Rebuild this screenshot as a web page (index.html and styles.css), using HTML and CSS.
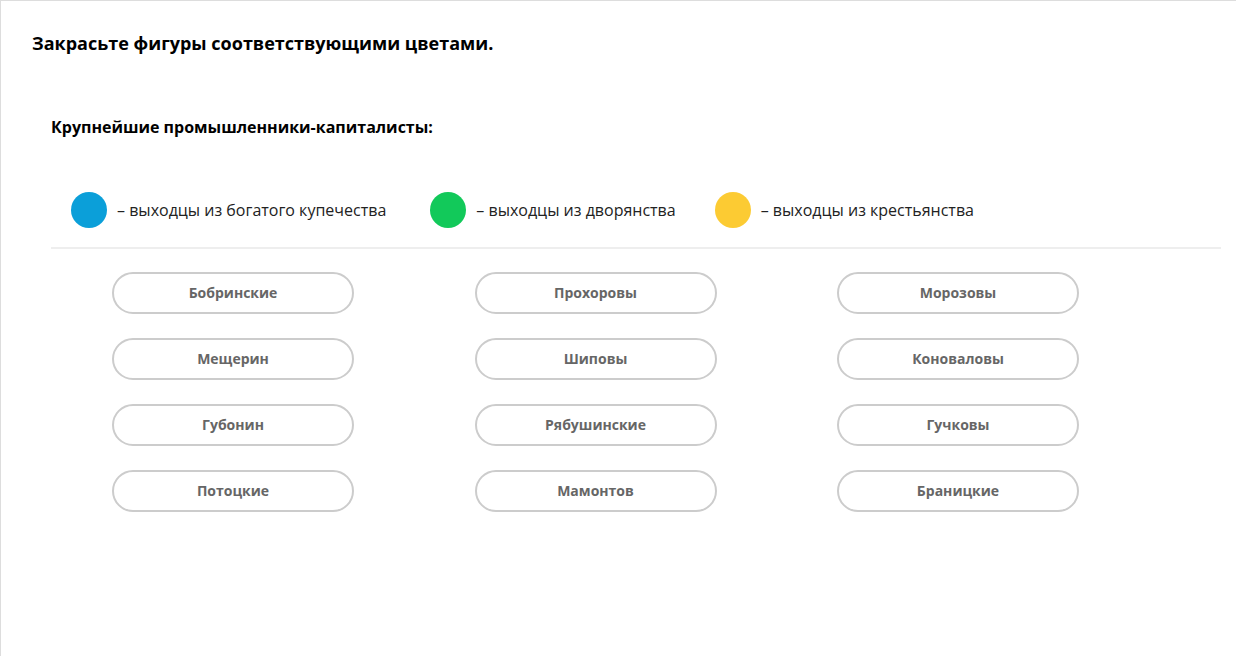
FILE: index.html
```html
<!DOCTYPE html>
<html lang="ru">
<head>
    <meta charset="UTF-8">
    <title>Промышленники-капиталисты</title>
    <link rel="stylesheet" href="styles.css">
</head>
<body>
    <div id="task">
        <h1 class="title">Закрасьте фигуры соответствующими цветами.</h1>
        <div class="block">
            <h2 class="subtitle">Крупнейшие промышленники-капиталисты:</h2>
            <ul class="legend">
                <li><span class="dot blue"></span>– выходцы из богатого купечества</li>
                <li><span class="dot green"></span>– выходцы из дворянства</li>
                <li><span class="dot yellow"></span>– выходцы из крестьянства</li>
            </ul>
            <ul class="names">
                <li>Бобринские</li>
                <li>Прохоровы</li>
                <li>Морозовы</li>
                <li>Мещерин</li>
                <li>Шиповы</li>
                <li>Коноваловы</li>
                <li>Губонин</li>
                <li>Рябушинские</li>
                <li>Гучковы</li>
                <li>Потоцкие</li>
                <li>Мамонтов</li>
                <li>Браницкие</li>
            </ul>
        </div>
    </div>
</body>
</html>
```

FILE: styles.css
```css
* { margin:0; padding:0; box-sizing: border-box;}
ul,li {list-style: none;}

body {font-family: "Open Sans", "Liberation Sans", sans-serif; color: #000; background: #fff;}

#task {height: 656px; border-top: 1px solid #ddd; border-left: 1px solid #ddd; padding: 30px 15px 0 31px;}

#task .title {font-size: 18px; font-weight: 700; line-height: 24px;}

#task .block {padding-left: 19px; margin-top: 61px;}
#task .subtitle {font-size: 16px; font-weight: 700; line-height: 22px;}

#task .legend {display: flex; align-items: center; margin-top: 54px; padding: 0 0 19px 20px; border-bottom: 2px solid #eee;}
#task .legend li {display: flex; align-items: center; font-size: 16px; line-height: 22px; color: #222; margin-right: 44px;}
#task .legend li:nth-child(2) {margin-right: 39px;}
#task .legend .dot {width: 36px; height: 36px; border-radius: 50%; margin-right: 10px;}
#task .legend .blue {background-color: #0b9fd9;}
#task .legend .green {background-color: #12c95a;}
#task .legend .yellow {background-color: #fccb33;}

#task .names {display: grid; grid-template-columns: repeat(3, 242px); column-gap: 120.5px; row-gap: 24px; padding: 23px 0 0 61px;}
#task .names li {height: 42px; border: 2px solid #ccc; border-radius: 21px; text-align: center;
                 line-height: 38px; font-size: 14px; font-weight: 700; color: #666;}
```
